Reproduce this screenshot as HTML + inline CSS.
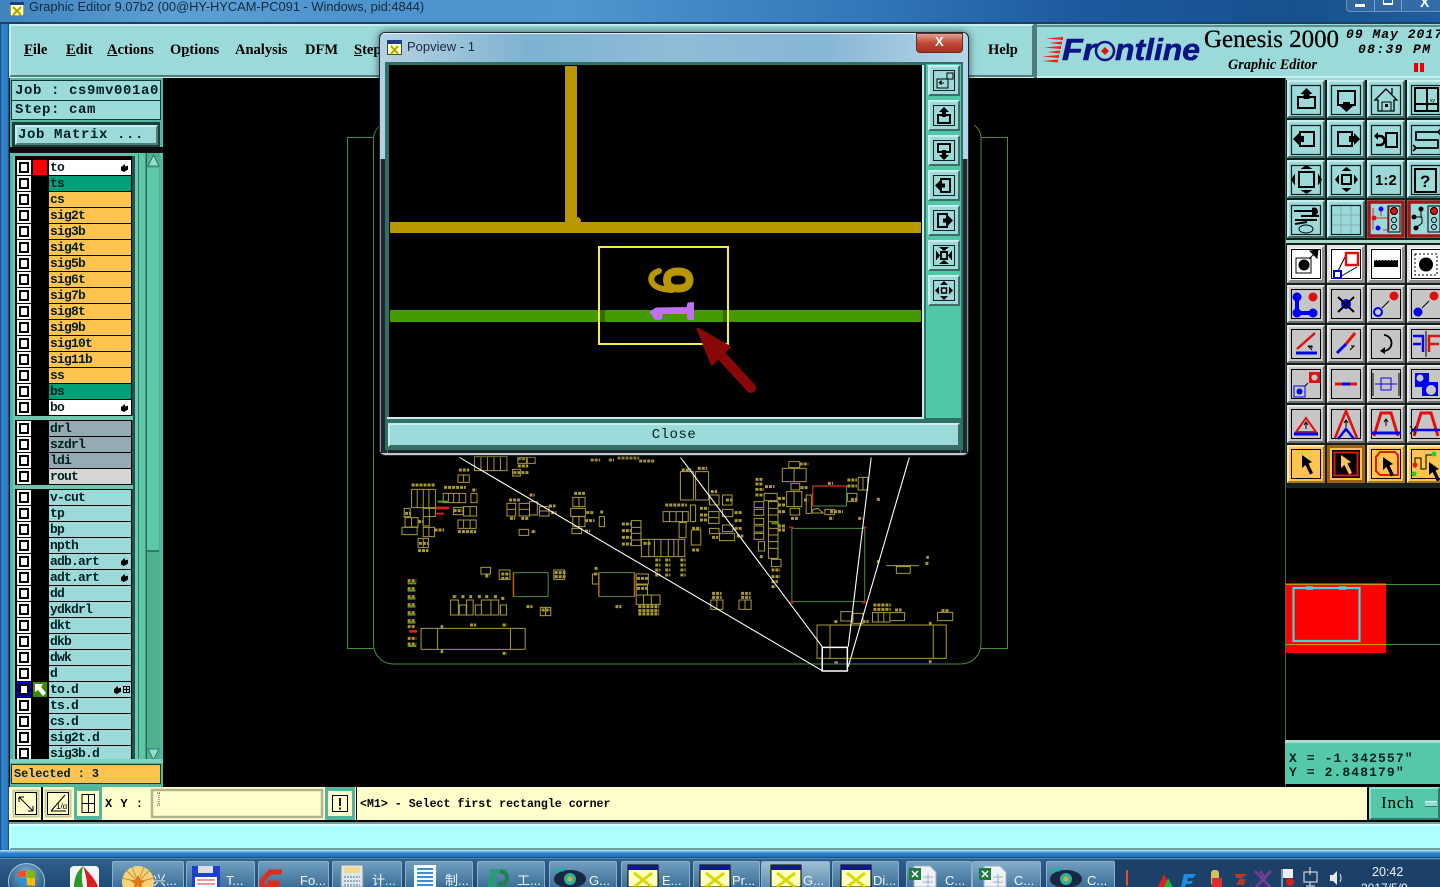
<!DOCTYPE html>
<html><head><meta charset="utf-8"><title>Graphic Editor</title>
<style>
html,body{margin:0;padding:0;width:1440px;height:887px;overflow:hidden;background:#000}
div,span,b,i,svg{position:absolute;display:block}
#root{position:relative;left:0;top:0;width:1440px;height:887px;overflow:hidden;background:#000}
body{font-family:"Liberation Mono",monospace;color:#001a1a}
.m{font:bold 14.5px/18px "Liberation Serif",serif;top:41px;color:#000;white-space:nowrap}
.m u{position:static;display:inline}
.box{background:#9cd9d9;font:bold 14px/17px "Liberation Mono",monospace;letter-spacing:.6px;white-space:pre;color:#00201f;box-sizing:border-box;padding-left:2px}
.r{left:17px;width:114px;height:15px}
.c{left:0;top:0;width:14px;height:15px;background:#fff}
.c:before{content:"";position:absolute;left:2px;top:2px;width:6px;height:7px;border:2px solid #000;background:#fff}
.p{left:16px;top:0;width:14px;height:15px}
.n{left:32px;top:0;width:82px;height:15px;font:bold 13px/16px "Liberation Mono",monospace;letter-spacing:-.8px;padding-left:1px;box-sizing:border-box;color:#00201f;white-space:pre;overflow:hidden;background:#9cd9d9}
.o{background:#fec351}.w{background:#fff}.g{background:#00a078}.s{background:#95aab2}.l{background:#d6d6d6}
.h{right:3px;top:4px;width:7px;height:8px;background:#000;clip-path:polygon(0 40%,50% 0,60% 30%,100% 20%,100% 70%,40% 100%,0 80%)}
.t{top:861px;height:26px;background:linear-gradient(#6f9ec0,#3d6f96);border:1px solid #8ab0cc;border-bottom:0;box-sizing:border-box;border-radius:2px 2px 0 0}
.tt{top:872px;font:13px/17px "Liberation Sans","Noto Sans CJK SC",sans-serif;color:#eef6fb;white-space:nowrap}
</style></head><body><div id="root">

<!-- Aero frame -->
<div style="left:0;top:0;width:1440px;height:24px;background:linear-gradient(90deg,#3f83bf 0,#5da0d4 12%,#4d93cd 25%,#4f95cf 40%,#2f74b5 62%,#1c5a9e 75%,#17518f 90%,#1e5d9e 100%)"></div>
<div style="left:0;top:22px;width:1440px;height:2px;background:#1e3f60"></div>
<div style="left:0;top:24px;width:9px;height:834px;background:linear-gradient(90deg,#1e3e62,#2f86cf 20%,#2a7cc6 85%,#1b3450)"></div>
<div style="left:0;top:850px;width:1440px;height:8px;background:linear-gradient(#bfe4f6,#2a82d0 40%,#2478c4 80%,#143e68)"></div>

<svg style="left:10px;top:2px" width="14" height="14"><rect width="14" height="14" fill="#ffffc0" stroke="#444"/><rect width="14" height="3" fill="#223a80"/><path d="M3 5l8 8M11 5l-8 8" stroke="#a8a800" stroke-width="2"/></svg>
<span style="left:29px;top:-1px;font:12.85px/15px 'Liberation Sans',sans-serif;color:#132a3c;white-space:nowrap">Graphic Editor 9.07b2 (00@HY-HYCAM-PC091 - Windows, pid:4844)</span>

<!-- window buttons -->
<div style="left:1346px;top:0;width:94px;height:12px;border:1px solid #6e93b5;border-top:0;border-right:0;border-radius:0 0 0 4px;box-sizing:border-box;background:rgba(255,255,255,.1)"></div>
<div style="left:1374px;top:0;width:1px;height:11px;background:#7fa3c2"></div><div style="left:1401px;top:0;width:1px;height:11px;background:#7fa3c2"></div>
<div style="left:1355px;top:4px;width:10px;height:3px;background:#fff"></div>
<div style="left:1383px;top:0;width:10px;height:5px;border:1px solid #fff;border-top:0;box-sizing:border-box;border-bottom-width:2px"></div>
<span style="left:1420px;top:-5px;font:bold 14px/14px 'Liberation Sans',sans-serif;color:#fff">X</span>

<!-- menu bar -->
<div style="left:9px;top:24px;width:1431px;height:54px;background:#9cd9d9;border-bottom:2px solid #c8efef;box-sizing:border-box"></div>
<div style="left:9px;top:24px;width:1025px;height:53px;box-sizing:border-box;border:2px solid;border-color:#c6eeee #4f7d7a #4f7d7a #c6eeee"></div>
<div style="left:1034px;top:24px;width:3px;height:54px;background:#4f7d7a"></div>
<div style="left:1036px;top:25px;width:404px;height:2px;background:#5f8c88"></div>
<span class="m" style="left:24px"><u>F</u>ile</span>
<span class="m" style="left:66px"><u>E</u>dit</span>
<span class="m" style="left:107px"><u>A</u>ctions</span>
<span class="m" style="left:170px">O<u>p</u>tions</span>
<span class="m" style="left:235px">Analysis</span>
<span class="m" style="left:305px">DFM</span>
<span class="m" style="left:354px"><u>S</u>tep</span>
<span class="m" style="left:988px">Help</span>

<!-- logo -->
<svg style="left:1036px;top:26px" width="404" height="52">
<path d="M10 12.500L27 11V14zM13 17L26 15.500V18.500zM8 21.500L25 20V23zM11 26L24 24.500V27.500zM6 30.500L23 29V32zM6 35L22 33.500V36.500z" fill="#f0201c"/>
<text x="26" y="34" font-family="Liberation Sans,sans-serif" font-size="31" font-style="italic" font-weight="bold" fill="#0a1486" stroke="#0a1486" stroke-width=".6" textLength="34" lengthAdjust="spacingAndGlyphs">Fr</text>
<circle cx="69" cy="25" r="9" fill="#9cd9d9" stroke="#0a1486" stroke-width="2.500"/><path d="M69 21l4 4-4 4-4-4z" fill="#e01010"/>
<text x="79" y="34" font-family="Liberation Sans,sans-serif" font-size="31" font-style="italic" font-weight="bold" fill="#0a1486" stroke="#0a1486" stroke-width=".6" textLength="85" lengthAdjust="spacingAndGlyphs">ntline</text>
<text x="168" y="21" font-family="Liberation Serif,serif" font-size="25" fill="#000" stroke="#000" stroke-width=".3" textLength="135" lengthAdjust="spacingAndGlyphs">Genesis 2000</text>
<text x="192" y="43" font-family="Liberation Serif,serif" font-size="14.5" font-style="italic" font-weight="bold" fill="#000" textLength="89" lengthAdjust="spacingAndGlyphs">Graphic Editor</text>
<text x="310" y="12" font-family="Liberation Mono,monospace" font-size="13" font-style="italic" font-weight="bold" fill="#000" textLength="96">09 May 2017</text>
<text x="322" y="27" font-family="Liberation Mono,monospace" font-size="13" font-style="italic" font-weight="bold" fill="#000" textLength="72">08:39 PM</text>
<path d="M378 37h4v9h-4zM384 37h4v9h-4z" fill="#ee0000"/>
</svg>

<!-- Left panel -->
<div style="left:10px;top:78px;width:153px;height:709px;background:#54b8a0"></div>
<div style="left:12px;top:81px;width:148px;height:19px;background:#9cd9d9;outline:1px solid #0f3a38"></div>
<span class="box" style="left:13px;top:83px;width:146px;height:16px">Job : cs9mv001a0</span>
<div style="left:12px;top:101px;width:148px;height:18px;background:#9cd9d9;outline:1px solid #0f3a38"></div>
<span class="box" style="left:13px;top:102px;width:146px;height:16px">Step: cam</span>
<div style="left:12px;top:122px;width:148px;height:25px;background:#1c3f3e"></div>
<div style="left:15px;top:125px;width:143px;height:20px;background:#9cd9d9;box-sizing:border-box;border:2px solid;border-color:#c6eeee #4f7d7a #4f7d7a #c6eeee"></div>
<span class="box" style="left:16px;top:127px;background:none;height:17px">Job Matrix ...</span>
<div style="left:10px;top:147px;width:153px;height:8px;background:#0d0d0d"></div>
<div style="left:10px;top:153px;width:153px;height:3px;background:#5cc4aa"></div>

<!-- list -->
<div style="left:13px;top:156px;width:121px;height:605px;background:#000"></div>
<div style="left:13px;top:156px;width:2px;height:605px;background:#6cc8b0"></div>
<div style="left:132px;top:156px;width:3px;height:605px;background:#24504c"></div>
<div style="left:15px;top:416px;width:118px;height:4px;background:#6cc8b0"></div>
<div style="left:15px;top:485px;width:118px;height:4px;background:#6cc8b0"></div>
<div style="left:135px;top:153px;width:12px;height:612px;background:linear-gradient(90deg,#6cc8b0 0,#6cc8b0 25%,#2f7a68 25%,#2f7a68 33%,#5cc8a8 33%,#5cc8a8 88%,#2a6a5c 88%)"></div>
<div style="left:147px;top:153px;width:13px;height:612px;background:#4fb090"></div>
<div style="left:147px;top:168px;width:12px;height:384px;background:#5cc8a8;border-bottom:2px solid #2f7a68;box-sizing:border-box"></div>
<svg style="left:147px;top:153px" width="13" height="612"><path d="M6.500 2L12 13H1z" fill="#8fded0" stroke="#2f7a68"/><path d="M1 596H12L6.500 607z" fill="#8fded0" stroke="#2f7a68"/></svg>

<div class="r" style="top:160px"><i class="c"></i><i class="p" style="background:#f00"></i><b class="n w">to</b><i class="h"></i></div>
<div class="r" style="top:176px"><i class="c"></i><b class="n g">ts</b></div>
<div class="r" style="top:192px"><i class="c"></i><b class="n o">cs</b></div>
<div class="r" style="top:208px"><i class="c"></i><b class="n o">sig2t</b></div>
<div class="r" style="top:224px"><i class="c"></i><b class="n o">sig3b</b></div>
<div class="r" style="top:240px"><i class="c"></i><b class="n o">sig4t</b></div>
<div class="r" style="top:256px"><i class="c"></i><b class="n o">sig5b</b></div>
<div class="r" style="top:272px"><i class="c"></i><b class="n o">sig6t</b></div>
<div class="r" style="top:288px"><i class="c"></i><b class="n o">sig7b</b></div>
<div class="r" style="top:304px"><i class="c"></i><b class="n o">sig8t</b></div>
<div class="r" style="top:320px"><i class="c"></i><b class="n o">sig9b</b></div>
<div class="r" style="top:336px"><i class="c"></i><b class="n o">sig10t</b></div>
<div class="r" style="top:352px"><i class="c"></i><b class="n o">sig11b</b></div>
<div class="r" style="top:368px"><i class="c"></i><b class="n o">ss</b></div>
<div class="r" style="top:384px"><i class="c"></i><b class="n g">bs</b></div>
<div class="r" style="top:400px"><i class="c"></i><b class="n w">bo</b><i class="h"></i></div>

<div class="r" style="top:421px"><i class="c"></i><b class="n s">drl</b></div>
<div class="r" style="top:437px"><i class="c"></i><b class="n s">szdrl</b></div>
<div class="r" style="top:453px"><i class="c"></i><b class="n s">ldi</b></div>
<div class="r" style="top:469px"><i class="c"></i><b class="n l">rout</b></div>

<div class="r" style="top:490px"><i class="c"></i><b class="n">v-cut</b></div>
<div class="r" style="top:506px"><i class="c"></i><b class="n">tp</b></div>
<div class="r" style="top:522px"><i class="c"></i><b class="n">bp</b></div>
<div class="r" style="top:538px"><i class="c"></i><b class="n">npth</b></div>
<div class="r" style="top:554px"><i class="c"></i><b class="n">adb.art</b><i class="h"></i></div>
<div class="r" style="top:570px"><i class="c"></i><b class="n">adt.art</b><i class="h"></i></div>
<div class="r" style="top:586px"><i class="c"></i><b class="n">dd</b></div>
<div class="r" style="top:602px"><i class="c"></i><b class="n">ydkdrl</b></div>
<div class="r" style="top:618px"><i class="c"></i><b class="n">dkt</b></div>
<div class="r" style="top:634px"><i class="c"></i><b class="n">dkb</b></div>
<div class="r" style="top:650px"><i class="c"></i><b class="n">dwk</b></div>
<div class="r" style="top:666px"><i class="c"></i><b class="n">d</b></div>
<div class="r" style="top:682px"><i class="c" style="background:#0000c0"></i><i class="p" style="background:#3f8a00"></i><svg style="left:17px;top:1px" width="12" height="13"><path d="M1 1h8L7 4l5 6-3 3-5-6-3 2z" fill="#fff"/></svg><b class="n">to.d</b><i class="h" style="right:10px"></i><svg style="left:106px;top:4px" width="7" height="7"><rect x=".5" y=".5" width="6" height="6" fill="#9cd9d9" stroke="#000"/><path d="M0 3.500h7M3.500 0v7" stroke="#000"/></svg></div>
<div class="r" style="top:698px"><i class="c"></i><b class="n">ts.d</b></div>
<div class="r" style="top:714px"><i class="c"></i><b class="n">cs.d</b></div>
<div class="r" style="top:730px"><i class="c"></i><b class="n">sig2t.d</b></div>
<div class="r" style="top:746px;height:13px;overflow:hidden"><i class="c"></i><b class="n">sig3b.d</b></div>

<div style="left:10px;top:759px;width:153px;height:6px;background:#7fd4bd"></div>
<div style="left:10px;top:763px;width:153px;height:22px;background:#54b8a0"></div>
<div style="left:12px;top:765px;width:148px;height:18px;background:#fec351;outline:1px solid #0f3a38;font:bold 11.8px/18px 'Liberation Mono',monospace;white-space:pre;padding-left:2px;box-sizing:border-box;color:#00201f">Selected : 3</div>

<!-- PCB -->
<svg style="left:163px;top:78px" width="1122" height="709" viewBox="163 78 1122 709">
<g fill="none" stroke="#4a8c3c" stroke-width="1">
<path d="M373.500 137.500H347.500V648.500H373.500M373.500 137V644a20 20 0 0 0 20 20H961a20 20 0 0 0 20-20V137M373.500 137Q375 129 381 125M974 125Q980 129 981 137M981 137.500H1007.500V648.500H981"/>
</g>
<g transform="translate(340 450) scale(.43365 .33333)">
<g fill="none" stroke="#a89a3a" stroke-width="1">
<path style="vector-effect:non-scaling-stroke" d="M310 20h75v42h-75zM325 20v42M340 20v42M355 20v42M370 20v42M272 75h26v22h-26zM285 75v22M398 58h18v20h-18zM410 22h20v18h-20zM432 22h18v18h-18zM165 118h55v55h-55zM178 118v55M192 118v55M205 118v55M238 130h52v28h-52zM250 130v28M262 130v28M275 130v28M302 130h14v28h-14zM148 175h14v25h-14zM192 175h28v25h-28zM206 175v25M192 200h14v28h-14zM150 203h30v28h-30zM165 203v28M143 232h35v22h-35zM192 232h26v28h-26zM205 232v28M262 172h22v22h-22zM285 170h30v28h-30zM300 170v28M272 210h42v25h-42zM285 210v25M300 210v25M180 265h24v28h-24zM192 265v28M385 160h20v38h-20zM385 178h20M413 160h24v38h-24zM413 178h24M437 155h18v40h-18zM460 170h22v28h-22zM460 183h22M532 175h34v24h-34zM537 142h28v28h-28zM551 142v28M537 200h28v30h-28zM551 200v30M598 200h12v30h-12zM535 235h22v16h-22zM413 238h22v18h-22zM785 65h30v85h-30zM820 65h30v85h-30zM745 185h58v30h-58zM760 185v30M775 185v30M790 185v30M808 165h12v50h-12zM852 135h22v30h-22zM850 185h24v35h-24zM850 203h24M882 135h22v30h-22zM882 178h24v22h-24zM882 225h24v20h-24zM852 235h22v16h-22zM875 250h35v22h-35zM782 218h16v45h-16zM810 240h22v45h-22zM672 212h22v75h-22zM672 232h22M672 250h22M672 270h22M695 268h100v52h-100zM712 268v52M725 268v52M740 268v52M757 268v52M770 268v52M780 268v52M955 155h22v18h-22zM955 178h22v18h-22zM955 205h22v18h-22zM955 228h22v18h-22zM955 250h22v18h-22zM988 155h22v170h-22zM988 175h22M988 195h22M988 215h22M988 235h22M988 255h22M988 275h22M988 295h22M978 130h30v22h-30zM965 275h14v28h-14zM995 328h22v22h-22zM1035 35h25v18h-25zM1020 55h55v40h-55zM1047 55v40M1040 100h20v20h-20zM1030 125h35v45h-35zM1047 125v45M1038 175h22v20h-22zM1195 82h22v38h-22zM1206 82v38M1170 130h22v24h-22zM1118 178h22v16h-22zM1075 135h12v55h-12zM325 352h22v20h-22zM367 360h25v28h-25zM493 360h25v28h-25zM582 372h14v30h-14zM683 372h28v30h-28zM683 405h26v30h-26zM683 435h55v28h-55zM700 435v28M718 435v28M855 450h28v28h-28zM869 450v28M920 450h28v28h-28zM934 450v28M255 450h18v45h-18zM275 465h16v30h-16zM292 450h15v45h-15zM312 465h14v30h-14zM326 450h22v45h-22zM348 450h18v45h-18zM370 465h14v30h-14zM462 472h24v25h-24zM474 472v25M187 535h240v63h-240zM225 535v63M393 535v63M1100 525h298v100h-298zM1130 525v100M1368 525v100M1155 485h28v28h-28zM1182 490h24v30h-24zM1228 488h40v28h-40zM1241 488v28M1254 488v28M1268 488h34v24h-34zM1378 487h35v25h-35zM1283 350h32v20h-32zM1260 347h75M1090 178l12-3 12 14h-24z"/>
</g>
<path d="M1090 108h78v60h-78z" fill="none" stroke="#4a8c3c" style="vector-effect:non-scaling-stroke"/>
<path d="M1090 108h78M1090 108v60" fill="none" stroke="#b03010" stroke-width="1.500" style="vector-effect:non-scaling-stroke"/>
<path d="M1042 235h168v220h-168z" fill="none" stroke="#4a8c3c" style="vector-effect:non-scaling-stroke"/>
<path d="M1042 232v8M1036 232h10M1210 232v8M1204 232h10M1042 450v8M1036 458h10M1210 450v8M1204 458h10" stroke="#b03010" stroke-width="1.500" style="vector-effect:non-scaling-stroke"/>
<path d="M400 368h80v72h-80zM597 368h82v72h-82z" fill="none" stroke="#4a8c3c" style="vector-effect:non-scaling-stroke"/>
<path d="M400 368v72M597 368v72M679 368v72" stroke="#b06020" stroke-width="1.500" style="vector-effect:non-scaling-stroke"/>
<g stroke="#a89838" stroke-width="3" fill="none" stroke-dasharray="3 1">
<path style="vector-effect:non-scaling-stroke" d="M274 60h24M400 68h35M410 48h24M410 26h20M578 30h22M620 30h12M640 24h50M690 33h35M165 105h55M240 112h50M305 120h10M262 182h20M150 190h14M180 215h12M218 240h22M272 245h42M180 302h24M182 280h22M392 205h12M418 205h18M390 150h25M437 135h12M482 168h15M487 188h12M540 130h25M568 188h18M565 212h22M600 186h8M565 243h12M442 245h10M788 60h22M825 55h22M750 165h50M830 175h20M830 195h20M830 210h20M855 125h15M890 150h15M910 188h18M910 212h18M910 235h18M858 262h14M915 258h15M812 235h20M812 300h18M650 222h22M650 242h22M650 262h22M650 282h22M700 280h18M727 330h12M727 345h12M727 360h12M727 375h12M750 330h12M750 345h12M750 360h12M750 375h12M785 330h12M785 345h12M785 360h12M785 375h12M958 88h18M958 102h18M958 118h20M958 135h20M980 110h22M1010 145h18M1010 165h18M1010 185h18M1010 228h18M1010 240h18M1060 42h20M1062 113h18M1040 205h16M1070 150h10M1125 100h12M1130 185h30M1128 205h10M1170 90h22M1170 108h22M1178 148h14M1195 205h10M1238 148h8M1238 335h6M1350 340h8M1352 322h6M995 360h20M995 380h20M995 395h15M995 410h10M968 320h8M335 378h10M372 372h20M372 385h20M495 368h25M495 380h25M587 355h8M592 372h-6M685 385h25M685 415h25M688 470h48M688 482h48M688 492h48M858 430h22M858 442h22M925 430h22M925 442h22M260 440h10M280 440h8M298 440h8M318 440h8M335 440h8M355 440h8M372 445h8M430 470h14M635 470h14M465 480h20M300 525h14M375 525h10M232 530h6M232 605h6M375 610h10M1140 515h8M1205 515h14M1230 465h40M1230 478h40M1280 480h15M1387 482h18M1358 520h6M1358 635h6"/>
</g>
<g stroke="#b09030" stroke-width="3" fill="none" stroke-dasharray="3 1"><path style="vector-effect:non-scaling-stroke" d="M156 392h20M156 416h18M156 440h18M156 464h18M156 488h18M156 512h18M156 530h18M156 565h20M156 582h20"/></g>
<g stroke="#5a9a20" stroke-width="2" fill="none"><path style="vector-effect:non-scaling-stroke" d="M156 400h20M156 422h18M156 446h18M156 470h18M156 494h18M156 518h18M156 588h20M225 155h25M995 220h18"/></g>
<path d="M160 540h18v8h-18zM222 170h30v8h-30zM222 188h18v6h-18z" fill="#e02020"/>
<g fill="none" stroke="#fff" stroke-width="1.100">
<path style="vector-effect:non-scaling-stroke" d="M275 22L1112 662M785 22L1112 590M1225 22L1172 590M1313 22L1172 650"/>
<path style="vector-effect:non-scaling-stroke" d="M1112 592h58v71h-58z" stroke-width="1.500"/>
</g>
<path d="M1140 634h8v6h-8z" fill="#b0a040"/>
</g>
</svg>

<!-- Right panel -->
<div style="left:1285px;top:78px;width:155px;height:410px;background:#16201f"></div>
<div style="left:1285px;top:78px;width:1px;height:710px;background:#3a6a5c"></div>
<div style="left:1286px;top:78px;width:154px;height:2px;background:#9cd9d9"></div>
<div style="left:1286px;top:240px;width:154px;height:3px;background:#a8d8c8"></div>
<svg style="left:1286px;top:78px" width="154" height="410" viewBox="0 0 154 410">
<defs>
<g id="T"><rect width="38" height="38" fill="#9cd9d9"/><path d="M0 0H38L36 2H2V36L0 38Z" fill="#c6eeee"/><path d="M38 0V38H0L2 36H36V2Z" fill="#3e6b68"/><rect x="4.500" y="5.500" width="29" height="29" fill="none" stroke="#102020" stroke-width="1.200"/></g>
<g id="W"><rect width="38" height="38" fill="#fff"/><path d="M0 0H38L35 3H3V35L0 38Z" fill="#e4e4e4"/><path d="M38 0V38H0L3 35H35V3Z" fill="#8c8c8c"/><rect x="4.500" y="4.500" width="29" height="29" fill="none" stroke="#000"/></g>
<g id="G"><rect width="38" height="38" fill="#c6c6c6"/><path d="M0 0H38L36 2H2V36L0 38Z" fill="#e8e8e8"/><path d="M38 0V38H0L2 36H36V2Z" fill="#6c6c6c"/><rect x="4.500" y="4.500" width="29" height="29" fill="none" stroke="#000"/></g>
<g id="O"><rect width="38" height="38" fill="#fec351"/><path d="M0 0H38L36 2H2V36L0 38Z" fill="#ffe7a8"/><path d="M38 0V38H0L2 36H36V2Z" fill="#a07a20"/><rect x="4.500" y="4.500" width="29" height="29" fill="none" stroke="#000"/></g>
<path id="cur" d="M0 0L10 7 6.500 8.500 11 18 8 19.500 3.500 10 0 13Z"/>
</defs>
<!-- rows 1-4 -->
<g transform="translate(1 2)"><use href="#T"/><path d="M11 17h17v11H11z" fill="none" stroke="#000" stroke-width="2"/><path d="M19.500 8l6 6h-3v5h-6v-5h-3z"/></g>
<g transform="translate(41 2)"><use href="#T"/><path d="M11 11h17v14H11z" fill="none" stroke="#000" stroke-width="2"/><path d="M16 22h7v4h3l-6.500 6-6.500-6h3z"/></g>
<g transform="translate(81 2)"><use href="#T"/><path d="M19 9L8 20h3v11h16V20h3zM25 8v6" fill="none" stroke="#000" stroke-width="1.300"/><path d="M15 22h9v9h-9z" fill="#9cd9d9" stroke="#000"/><path d="M18 24h3v3h-3z"/></g>
<g transform="translate(121 2)"><use href="#T"/><path d="M8 8h23v23H8zM8 24h23M20 8v23" fill="none" stroke="#000" stroke-width="2"/><text x="23" y="22" font-family="Liberation Sans,sans-serif" font-size="5" fill="#000">xy</text></g>
<g transform="translate(1 42)"><use href="#T"/><path d="M13 12h14v14H13z" fill="none" stroke="#000" stroke-width="2"/><path d="M6 19l6-6v3h5v6h-5v3z"/></g>
<g transform="translate(41 42)"><use href="#T"/><path d="M11 12h14v14H11z" fill="none" stroke="#000" stroke-width="2"/><path d="M33 19l-6-6v3h-5v6h5v3z"/></g>
<g transform="translate(81 42)"><use href="#T"/><path d="M19 13h11v14H19z" fill="none" stroke="#000" stroke-width="2"/><path d="M9 16h4a4 4 0 0 1 0 9h-4" fill="none" stroke="#000" stroke-width="2.500"/><path d="M7 16l4-4v8z"/></g>
<g transform="translate(121 42)"><use href="#T"/><path d="M31 12H9V20H31V28H9M31 12l3-3M31 12l3 3M9 28l-3-3M9 28l-3 3" fill="none" stroke="#000" stroke-width="1.800"/></g>
<g transform="translate(1 82)"><use href="#T"/><path d="M12 12h15v15H12z" fill="none" stroke="#000" stroke-width="2"/><path d="M19.500 5l6 4h-12zM19.500 34l6-4h-12zM4 19.500l4-6v12zM35 19.500l-4-6v12z"/></g>
<g transform="translate(41 82)"><use href="#T"/><path d="M15 15h9v9h-9z" fill="none" stroke="#000" stroke-width="2"/><path d="M19.500 7l5 4h-10zM19.500 32l5-4h-10zM8 19.500l4-5v10zM31 19.500l-4-5v10z"/></g>
<g transform="translate(81 82)"><use href="#T"/><text x="8" y="25" font-family="Liberation Sans,sans-serif" font-weight="bold" font-size="15" fill="#000">1:2</text></g>
<g transform="translate(121 82)"><use href="#T"/><path d="M8 9h21v23H8z" fill="none" stroke="#000" stroke-width="2"/><text x="13" y="27" font-family="Liberation Sans,sans-serif" font-weight="bold" font-size="17" fill="#000">?</text></g>
<g transform="translate(1 122)"><use href="#T"/><path d="M7 11h22M14 16h18M8 20h22M8 24l12-2" stroke="#000" stroke-width="2"/><path d="M25 8a4 4 0 1 1 0 7z"/><ellipse cx="19" cy="29" rx="7" ry="4" fill="#9cd9d9" stroke="#000"/></g>
<g transform="translate(41 122)"><use href="#T"/><path d="M5 15h28M5 25h28M14 6v28M24 6v28" stroke="#86aeb4"/></g>
<g transform="translate(81 122)"><rect width="38" height="38" fill="#9cd9d9"/><rect x="2" y="2" width="34" height="34" fill="#9cd9d9" stroke="#a01818" stroke-width="3.500"/><path d="M6 8V30M6 18h7l8 0M14 8v8M16 30h6M22 6v24" fill="none" stroke="#e03030"/><circle cx="14" cy="9" r="2.500" fill="#10f"/><circle cx="7" cy="18" r="2.500" fill="#e01010"/><circle cx="11" cy="28" r="2.500" fill="#10f"/><rect x="21" y="6" width="12" height="26" fill="none" stroke="#000"/><circle cx="27" cy="11" r="3.500" fill="#e01010" stroke="#000"/><circle cx="27" cy="20" r="2.500" fill="none" stroke="#000"/><circle cx="27" cy="27" r="2.500" fill="none" stroke="#000"/></g>
<g transform="translate(121 122)"><rect width="38" height="38" fill="#9cd9d9"/><rect x="2" y="2" width="34" height="34" fill="#9cd9d9" stroke="#a01818" stroke-width="3.500"/><path d="M7 17h8M14 9v8M10 27l5-4v-6" fill="none" stroke="#000"/><circle cx="14" cy="9" r="2.500"/><circle cx="7" cy="17" r="2.500"/><circle cx="9" cy="28" r="2.500"/><rect x="21" y="6" width="12" height="26" fill="none" stroke="#000"/><circle cx="27" cy="11" r="3.500" fill="#e01010" stroke="#000"/><circle cx="27" cy="20" r="2.500" fill="none" stroke="#000"/><circle cx="27" cy="27" r="2.500" fill="none" stroke="#000"/></g>
<!-- white row -->
<g transform="translate(1 167)"><use href="#W"/><rect x="9" y="13" width="15" height="15" fill="none" stroke="#000"/><circle cx="17" cy="20" r="5.500"/><path d="M22 14l7-7M31 5l-8 1 7 7z" stroke="#000"/></g>
<g transform="translate(41 167)"><use href="#W"/><path d="M10 28L19 10M11 33L30 22" stroke="#000" fill="none"/><path d="M19 8h12v12H19z" fill="#fff" stroke="#e01010" stroke-width="2.500"/><path d="M7 26h7v7H7z" fill="#fff" stroke="#00d" stroke-width="2"/></g>
<g transform="translate(81 167)"><use href="#W"/><path d="M7 15h24v7H7z"/><path d="M8 14v2M11 14v2M14 14v2M17 14v2M20 14v2M23 14v2M26 14v2M29 14v2" stroke="#fff"/></g>
<g transform="translate(121 167)"><use href="#W"/><rect x="8" y="9" width="22" height="21" fill="none" stroke="#000" stroke-dasharray="2 2"/><circle cx="19" cy="19.500" r="7"/></g>
<!-- gray rows -->
<g transform="translate(1 207)"><use href="#G"/><path d="M10 12V28H26" fill="none" stroke="#00e" stroke-width="4"/><circle cx="10" cy="12" r="4.500" fill="#00e"/><circle cx="10" cy="28" r="4.500" fill="#00e"/><circle cx="26" cy="28" r="4.500" fill="#00e"/><circle cx="26" cy="12" r="4.500" fill="#e01010"/></g>
<g transform="translate(41 207)"><use href="#G"/><circle cx="19" cy="19" r="5" fill="#00e"/><path d="M11 12l16 15M27 12L11 27" stroke="#000" stroke-width="2"/></g>
<g transform="translate(81 207)"><use href="#G"/><circle cx="11" cy="27" r="4" fill="none" stroke="#00e" stroke-width="2"/><circle cx="27" cy="11" r="4.500" fill="#e01010"/><path d="M15 23l7-7" stroke="#000"/></g>
<g transform="translate(121 207)"><use href="#G"/><circle cx="11" cy="27" r="4.500" fill="#00e"/><circle cx="27" cy="11" r="4.500" fill="#e01010"/><path d="M15 23l7-7" stroke="#000"/></g>
<g transform="translate(1 247)"><use href="#G"/><path d="M10 24L28 8" stroke="#e01010" stroke-width="2.500"/><path d="M9 28h21" stroke="#00e" stroke-width="3"/><path d="M21 21l4 4M21 21h4v2" stroke="#000"/></g>
<g transform="translate(41 247)"><use href="#G"/><path d="M10 28L19 19" stroke="#00e" stroke-width="3"/><path d="M19 19L28 8" stroke="#e01010" stroke-width="3"/><path d="M23 25l4-4h-3" stroke="#000" fill="none"/></g>
<g transform="translate(81 247)"><use href="#G"/><path d="M17 10a8 8 0 1 1 -1 16" fill="none" stroke="#000" stroke-width="1.800"/><path d="M13 26l5-4v7z"/></g>
<g transform="translate(121 247)"><use href="#G"/><path d="M6 11h10V27M6 19h8" fill="none" stroke="#10e" stroke-width="2.500"/><path d="M19 6V32" stroke="#000"/><path d="M34 11H22V27M22 19h10" fill="none" stroke="#e01010" stroke-width="2.500"/></g>
<g transform="translate(1 287)"><use href="#G"/><path d="M22 7h11v11H22z" fill="#e01010"/><circle cx="27.500" cy="12.500" r="3" fill="#c6c6c6"/><rect x="7" y="21" width="11" height="11" fill="none" stroke="#00e"/><circle cx="12.500" cy="26.500" r="3" fill="#00e"/><path d="M18 21l3-3" stroke="#000"/></g>
<g transform="translate(41 287)"><use href="#G"/><path d="M8 19h22" stroke="#e01010" stroke-width="3"/><path d="M15 19h8" stroke="#00e" stroke-width="3"/></g>
<g transform="translate(81 287)"><use href="#G"/><path d="M6 8V31M32 8V31" stroke="#000"/><path d="M8 19h22" stroke="#10e"/><rect x="14" y="13" width="10" height="12" fill="none" stroke="#10e"/></g>
<g transform="translate(121 287)"><use href="#G"/><path d="M8 8h14v9h9v14H15v-9H8z" fill="#00e"/><circle cx="13" cy="13" r="3.500" fill="#c6c6c6"/><circle cx="24" cy="25" r="5" fill="#c6c6c6"/></g>
<g transform="translate(1 327)"><use href="#G"/><path d="M19 13L29 27H9z" fill="none" stroke="#e01010" stroke-width="2"/><path d="M7 29h24" stroke="#00e" stroke-width="3"/><path d="M19 24v-6M17 20l2-3 2 3" stroke="#000" fill="none"/></g>
<g transform="translate(41 327)"><use href="#G"/><path d="M8 33L19 6 30 33" fill="none" stroke="#e01010" stroke-width="2.500"/><path d="M11 34L19 24 27 34" fill="none" stroke="#00e" stroke-width="2.500"/><path d="M19 22v-6M17 18l2-3 2 3" stroke="#000" fill="none"/></g>
<g transform="translate(81 327)"><use href="#G"/><path d="M7 31L14 8H24L31 31" fill="none" stroke="#e01010" stroke-width="3"/><path d="M4 28h30" stroke="#00e" stroke-width="3"/><path d="M19 21v-6M17 17l2-3 2 3" stroke="#000" fill="none"/></g>
<g transform="translate(121 327)"><use href="#G"/><path d="M7 31L14 8H24L31 31" fill="none" stroke="#e01010" stroke-width="3"/><path d="M4 25h30" stroke="#00e" stroke-width="2.500"/><path d="M3 21l6 8M9 21l-6 8" stroke="#000"/></g>
<!-- orange -->
<g transform="translate(1 367)"><use href="#O"/><use href="#cur" transform="translate(15 10)"/></g>
<g transform="translate(41 367)"><rect width="38" height="38" fill="#a06018"/><rect x="3" y="3" width="32" height="32" fill="#fec351"/><rect x="5" y="5" width="28" height="28" fill="#000"/><rect x="7.500" y="7.500" width="23" height="23" fill="#000" stroke="#d02010" stroke-width="2"/><use href="#cur" transform="translate(14 10)" fill="#fec351"/></g>
<g transform="translate(81 367)"><use href="#O"/><path d="M9 12l4-5H28l3 3V30H13l-4-4z" fill="none" stroke="#d82010" stroke-width="2"/><use href="#cur" transform="translate(16 12)"/></g>
<g transform="translate(121 367)"><use href="#O"/><path d="M8 23V13H14V24H19V10H27" fill="none" stroke="#000"/><circle cx="8" cy="20" r="2.500" fill="#e02020"/><circle cx="7" cy="29" r="2.500" fill="#20d020"/><circle cx="27" cy="9" r="2.500" fill="#20d020"/><use href="#cur" transform="translate(22 17)"/></g>
</svg>

<!-- minimap -->
<div style="left:1286px;top:583px;width:100px;height:70px;background:#f00"></div>
<svg style="left:1286px;top:580px" width="154" height="70"><path d="M0 4.500H154M0 64.500H154" stroke="#4a8c3c"/><path d="M0 4.500H100M0 64.500H100" stroke="#d89000"/><path d="M7.500 8h66v53h-66z" fill="none" stroke="#40d8e0" stroke-width="2.200"/><path d="M20 8h7M53 8h7" stroke="#40d8e0" stroke-width="3.500"/></svg>
<div style="left:1285px;top:740px;width:155px;height:3px;background:#a8ded0"></div>
<div style="left:1285px;top:743px;width:155px;height:41px;background:#54c8a8"></div>
<span class="box" style="left:1287px;top:750px;background:none;letter-spacing:1.100px;font-size:13px;height:16px">X = -1.342557"</span>
<span class="box" style="left:1287px;top:764px;background:none;letter-spacing:1.100px;font-size:13px;height:16px">Y = 2.848179"</span>

<!-- bottom command row -->
<div style="left:9px;top:787px;width:1431px;height:33px;background:#ffffcc"></div>
<div style="left:9px;top:820px;width:1431px;height:4px;background:linear-gradient(#000 50%,#6f9f9f 50%)"></div>
<svg style="left:9px;top:787px" width="350" height="33">
<g fill="none" stroke="#000"><rect x="4.500" y="3.500" width="25" height="26" stroke="#c8c89a" stroke-width="2"/><rect x="6.500" y="5.500" width="21" height="22"/><path d="M10 10l14 14M10 10v5M10 10h5M24 24v-5M24 24h-5"/>
<rect x="36.500" y="3.500" width="25" height="26" stroke="#c8c89a" stroke-width="2"/><rect x="38.500" y="5.500" width="21" height="22"/><path d="M42 24h15M42 24L56 8"/><text x="47" y="22" font-size="8" font-family="Liberation Sans,sans-serif" fill="#000" stroke="none">1/α</text></g>
<rect x="32" y="0" width="2" height="33" fill="#000"/><rect x="65" y="0" width="28" height="33" fill="#57b49c"/><rect x="68" y="4" width="22" height="25" fill="#ffffcc"/>
<path d="M73 7.500H85.500V25.500H73V12zM73 16.500H85.500M79.500 7.500V25.500" fill="none" stroke="#000"/>
<rect x="143" y="3" width="170" height="27" fill="#ffffcc" stroke="#b4b48c" stroke-width="2.500"/>
<path d="M150 6v12M148 6h4M148 18h4" stroke="#444" stroke-dasharray="1 1"/>
<rect x="316" y="0" width="30" height="33" fill="#57b49c"/><rect x="319" y="4" width="24" height="25" fill="#ffffcc"/>
<rect x="323.500" y="8.500" width="15" height="16" fill="none" stroke="#000"/><path d="M331 11v8M331 20.500v2" stroke="#000" stroke-width="1.800"/>
<rect x="347" y="0" width="1" height="33" fill="#000"/>
</svg>
<span style="left:105px;top:796px;font:bold 12px/17px 'Liberation Mono',monospace;color:#000;white-space:pre;letter-spacing:.5px">X Y :</span>
<span style="left:360px;top:796px;font:bold 11.600px/17px 'Liberation Mono',monospace;color:#000;white-space:pre">&lt;M1&gt; - Select first rectangle corner</span>
<div style="left:1367px;top:787px;width:2px;height:33px;background:#000"></div>
<div style="left:1369px;top:787px;width:71px;height:33px;background:#54c8a8;border:2px solid;border-color:#8fded0 #2f7a68 #2f7a68 #8fded0;box-sizing:border-box"></div>
<span style="left:1381px;top:794px;font:17px/18px 'Liberation Serif',serif;letter-spacing:.8px;color:#000">Inch</span>
<div style="left:1425px;top:801px;width:12px;height:6px;background:#9cd9d9;border-bottom:1px solid #2f7a68;border-top:1px solid #d8f8f8;box-sizing:border-box"></div>

<!-- message bar -->
<div style="left:9px;top:824px;width:1431px;height:26px;background:#aeffff;border-top:2px solid #d8ffff;border-left:2px solid #d8ffff;border-bottom:2px solid #6f9f9f;box-sizing:border-box"></div>

<!-- Taskbar -->
<div style="left:0;top:858px;width:1440px;height:29px;background:linear-gradient(#2f5f8c,#1f4a74);border-top:1px solid #5d88ad;box-sizing:border-box"></div>
<div style="left:1115px;top:860px;width:325px;height:27px;background:#1c4068"></div>
<div style="left:8px;top:863px;width:37px;height:37px;border-radius:50%;background:radial-gradient(circle at 50% 30%,#7fb5d8,#28587f 70%);border:1px solid #a8c8dc;box-sizing:border-box"></div>
<svg style="left:17px;top:870px" width="20" height="17"><path d="M1 2l8-2v7H1z" fill="#f25022"/><path d="M10 0l8 1v7h-8z" fill="#7fba00"/><path d="M1 8h8v7l-8-2z" fill="#2f8ee0"/><path d="M10 8h8v8l-8-1z" fill="#ffb900"/></svg>
<svg style="left:70px;top:866px" width="29" height="21"><rect width="29" height="24" rx="4" fill="#f4f4f4"/><path d="M13 0C6 6 4 14 4 21h9C11 12 12 6 13 0z" fill="#2a9a2a"/><path d="M13 0C20 8 26 14 28 21H17C17 12 15 6 13 0z" fill="#d82020"/></svg>

<div class="t" style="left:112px;width:72px"></div>
<div class="t" style="left:186px;width:69px"></div>
<div class="t" style="left:258px;width:71px"></div>
<div class="t" style="left:332px;width:70px"></div>
<div class="t" style="left:405px;width:68px"></div>
<div class="t" style="left:477px;width:68px"></div>
<div class="t" style="left:549px;width:68px"></div>
<div class="t" style="left:621px;width:69px"></div>
<div class="t" style="left:693px;width:67px"></div>
<div class="t" style="left:761px;width:69px;background:linear-gradient(#9fc0d6,#5f8cb0)"></div>
<div class="t" style="left:832px;width:67px"></div>
<div class="t" style="left:906px;width:66px"></div>
<div class="t" style="left:972px;width:69px;background:linear-gradient(#85aecb,#4a7aa2)"></div>
<div class="t" style="left:1046px;width:69px"></div>

<svg style="left:118px;top:864px" width="1010" height="23">
<circle cx="20" cy="18" r="16" fill="#f6d27a"/><path d="M20 18L8 6M20 18L14 3M20 18L26 3M20 18L32 6M20 18L36 14M20 18L4 14" stroke="#c09030"/><path d="M20 11l2.500 5 5 .5-4 3.500 1 5-4.500-3-4.500 3 1-5-4-3.500 5-.5z" fill="#e07818"/>
<path d="M74 2h28v21H74z" fill="#1f3fd0"/><rect x="80" y="2" width="15" height="7" fill="#dde"/><rect x="77" y="13" width="22" height="10" fill="#fff"/><path d="M79 16h18M79 20h18" stroke="#d03030"/>
<path d="M164 8h-12l-8 9v6h8v-4h7v4h-7" fill="none" stroke="#d83020" stroke-width="5"/>
<rect x="223" y="1" width="22" height="22" fill="#dde6ee" stroke="#7f8f9f"/><rect x="226" y="3" width="16" height="6" fill="#f0d890"/><path d="M226 13h16M226 17h16M226 21h16" stroke="#607080" stroke-dasharray="2 1"/>
<rect x="296" y="1" width="22" height="22" fill="#f4f8fc"/><path d="M299 5h16M299 9h16M299 13h16M299 17h16M299 21h16" stroke="#3f8fd0" stroke-width="2"/>
<path d="M372 5h18l-2 5h-10v13h-8z" fill="#2a9a7a"/><path d="M382 8a6 6 0 0 1 2 12h-4" fill="none" stroke="#208050" stroke-width="4"/>
<ellipse cx="452" cy="15" rx="16" ry="9" fill="#182840"/><circle cx="452" cy="15" r="6" fill="#30b0a0"/><circle cx="452" cy="15" r="2.500" fill="#d0b030"/><path d="M436 6h10" stroke="#20b0a0" stroke-width="3"/>
<g id="x1"><rect x="510" y="1" width="30" height="22" fill="#ffffc0" stroke="#000"/><rect x="510" y="1" width="30" height="5" fill="#101890"/><path d="M516 9l18 14M534 9L516 23" stroke="#d8d800" stroke-width="3"/></g>
<use href="#x1" x="72"/><use href="#x1" x="143"/><use href="#x1" x="213"/>
<path d="M796 2h16l6 6v15h-22z" fill="#eef2f6" stroke="#a0b0c0"/><rect x="791" y="4" width="12" height="12" fill="#1f7a3c"/><path d="M794 7l6 6M800 7l-6 6" stroke="#fff" stroke-width="1.500"/><path d="M805 13h10M805 18h10M810 10v13" stroke="#a0b0c0"/>
<path d="M866 2h16l6 6v15h-22z" fill="#eef2f6" stroke="#a0b0c0"/><rect x="861" y="4" width="12" height="12" fill="#1f7a3c"/><path d="M864 7l6 6M870 7l-6 6" stroke="#fff" stroke-width="1.500"/><path d="M875 13h10M875 18h10M880 10v13" stroke="#a0b0c0"/>
<ellipse cx="948" cy="15" rx="16" ry="9" fill="#182840"/><circle cx="948" cy="15" r="6" fill="#30b0a0"/><circle cx="948" cy="15" r="2.500" fill="#d0b030"/><path d="M932 6h10" stroke="#20b0a0" stroke-width="3"/>
<rect x="1008" y="6" width="16" height="16" rx="2" fill="#e8501e"/><text x="1011" y="19" font-family="Liberation Sans,sans-serif" font-weight="bold" font-size="14" fill="#fff">S</text>
</svg>
<svg style="left:1150px;top:866px" width="225" height="21">
<path d="M8 21L14 8 20 21z" fill="#e02020"/><path d="M14 21l4-9 5 9z" fill="#20b040"/>
<path d="M34 8h12l-3 4h-5l-1 3h6l-2 3h-5l-1 3h-4z" fill="#1a8ee0"/>
<rect x="61" y="4" width="8" height="16" fill="#d0c060" rx="3"/><rect x="62" y="12" width="10" height="9" fill="#d83030"/>
<path d="M85 8h12l-6 5 5 0-2 6h-8l4-7h-4z" fill="#b03a28"/>
<path d="M105 5l16 17M121 5L105 22M110 5L115 12 120 5" stroke="#7a3a98" stroke-width="2.500" fill="none"/>
<path d="M132 3v18" stroke="#eee"/><path d="M133 3h10v9h-10z" fill="#eee"/><circle cx="140" cy="16" r="4" fill="#d02020"/>
<rect x="154" y="6" width="13" height="10" fill="none" stroke="#eee"/><path d="M160 1v8M156 20h9M160 16v4" stroke="#eee"/>
<path d="M180 9h3l4-4v14l-4-4h-3z" fill="#e8e8e8"/><path d="M190 8q2 4 0 8" stroke="#e8e8e8" fill="none"/>
</svg>
<span class="tt" style="left:153px">兴...</span>
<span class="tt" style="left:226px">T...</span>
<span class="tt" style="left:300px">Fo...</span>
<span class="tt" style="left:372px">计...</span>
<span class="tt" style="left:445px">制...</span>
<span class="tt" style="left:517px">工...</span>
<span class="tt" style="left:589px">G...</span>
<span class="tt" style="left:662px">E...</span>
<span class="tt" style="left:732px">Pr...</span>
<span class="tt" style="left:803px">G...</span>
<span class="tt" style="left:873px">Di...</span>
<span class="tt" style="left:945px">C...</span>
<span class="tt" style="left:1014px">C...</span>
<span class="tt" style="left:1087px">C...</span>
<span class="tt" style="left:1372px;top:864px;font-size:12.500px">20:42</span>
<span class="tt" style="left:1361px;top:880px;font-size:12px">2017/5/9</span>

<!-- Popup -->
<div style="left:379px;top:32px;width:590px;height:424px;border-radius:6px;border:1px solid #1a2a34;box-sizing:border-box;background:#1c2226;box-shadow:0 0 8px rgba(0,0,0,.6);overflow:hidden">
<div style="left:0;top:0;width:590px;height:126px;background:linear-gradient(90deg,#b6d2e2,#7eb2d2 25%,#8ebcd8 50%,#86b6d6 75%,#b8d6e8)"></div>
<div style="left:0;top:126px;width:8px;height:296px;background:#20282c;border-right:1px solid #5a6a70;border-left:1px solid #8a9298;box-sizing:border-box"></div>
<div style="left:580px;top:126px;width:8px;height:296px;background:#20282c;border-left:1px solid #5a6a70;border-right:1px solid #8a9298;box-sizing:border-box"></div>
<div style="left:1px;top:0;width:586px;height:1px;background:#e8f2f8"></div>
<div style="left:0;top:420px;width:590px;height:2px;background:#c0c8cc"></div>
</div>
<div style="left:916px;top:33px;width:47px;height:20px;background:linear-gradient(#e0a090,#c04a38 50%,#a83020);border-radius:0 0 4px 4px;border:1px solid #6a2a20;box-sizing:border-box"></div>
<span style="left:935px;top:35px;font:bold 13px/14px 'Liberation Sans',sans-serif;color:#fff">X</span>
<svg style="left:387px;top:40px" width="15" height="15"><rect x=".5" y=".5" width="14" height="14" fill="#ffffc0" stroke="#444"/><rect width="15" height="4" fill="#223a80"/><path d="M4 6l7 8M11 6l-7 8" stroke="#a8a800" stroke-width="2"/></svg>
<span style="left:407px;top:39px;font:13px/15px 'Liberation Sans',sans-serif;color:#1a2a3a">Popview - 1</span>
<div style="left:385px;top:62px;width:578px;height:387px;background:#2f6f64"></div>
<div style="left:389px;top:65px;width:533px;height:352px;background:#000"></div>
<div style="left:387px;top:417px;width:537px;height:2px;background:#c6eeee"></div>
<div style="left:922px;top:65px;width:2px;height:354px;background:#c6eeee"></div>
<div style="left:926px;top:64px;width:35px;height:354px;background:#4fc8a8"></div>
<svg style="left:389px;top:65px" width="533" height="352" viewBox="389 65 533 352">
<rect x="565" y="66" width="12" height="160" fill="#b89600"/>
<circle cx="577" cy="221" r="4" fill="#b89600"/>
<rect x="390" y="222" width="531" height="11" fill="#b89600"/>
<rect x="390" y="310" width="531" height="12" fill="#449a00"/>
<path d="M599 310h6v12h-6zM723 310h5v12h-5z" fill="#2a5a00" opacity=".7"/>
<rect x="599" y="247" width="129" height="97" fill="none" stroke="#f4ee40" stroke-width="2"/>
<path d="M667 280Q667 271.500 678 271.500Q689.500 271.500 689.500 280Q689.500 288.500 678 288.500Q667 288.500 667 280Z" fill="none" stroke="#b89600" stroke-width="8"/>
<path d="M659 271Q650 274 651.500 281Q654 289 672 290" fill="none" stroke="#b89600" stroke-width="6" stroke-linecap="round"/>
<path d="M650 312L656 308 687 307.500 688 303 693.500 302.500 693.500 319.500 688 319.500 687 313.500 662 313.500 661.500 319 655.500 319.500Z" fill="#c070f0" stroke="#c070f0" stroke-linejoin="round"/>
<path d="M698 329L729 347 712 364Z" fill="#880808" stroke="#880808" stroke-width="3" stroke-linejoin="round"/>
<path d="M718 352L751 388" stroke="#880808" stroke-width="10" stroke-linecap="round"/>
</svg>
<svg style="left:926px;top:64px" width="35" height="246" viewBox="0 0 35 246">
<defs><g id="P"><rect width="32" height="31" fill="#9cd9d9"/><path d="M0 0H32L30 2H2V29L0 31Z" fill="#c6eeee"/><path d="M32 0V31H0L2 29H30V2Z" fill="#3e6b68"/><rect x="5.500" y="5.500" width="21" height="20" fill="none" stroke="#102020"/></g></defs>
<g transform="translate(2 1)"><use href="#P"/><path d="M9 14h11v9H9z" fill="none" stroke="#000"/><path d="M19 8h6v6h-6z" fill="none" stroke="#000"/><path d="M11 18h5M11 18l2-2v4" stroke="#000"/></g>
<g transform="translate(2 36)"><use href="#P"/><path d="M10 15h12v8H10z" fill="none" stroke="#000" stroke-width="2"/><path d="M16 7l5 5h-3v5h-4v-5h-3z"/></g>
<g transform="translate(2 71)"><use href="#P"/><path d="M10 9h12v8H10z" fill="none" stroke="#000" stroke-width="2"/><path d="M16 25l5-5h-3v-5h-4v5h-3z"/></g>
<g transform="translate(2 106)"><use href="#P"/><path d="M13 9h9v13h-9z" fill="none" stroke="#000" stroke-width="2"/><path d="M7 15.500l5-5v3h5v4h-5v3z"/></g>
<g transform="translate(2 141)"><use href="#P"/><path d="M10 9h9v13h-9z" fill="none" stroke="#000" stroke-width="2"/><path d="M25 15.500l-5-5v3h-5v4h5v3z"/></g>
<g transform="translate(2 176)"><use href="#P"/><path d="M13 12h6v7h-6z" fill="none" stroke="#000" stroke-width="2"/><path d="M16 11l5-4H11zM16 20l5 4H11zM12 15.500l-4-5v10zM20 15.500l4-5v10z"/></g>
<g transform="translate(2 211)"><use href="#P"/><path d="M13.500 13h5v5h-5z" fill="none" stroke="#000" stroke-width="1.500"/><path d="M16 6l4 4h-8zM16 25l4-4h-8zM7 15.500l4-4v8zM25 15.500l-4-4v8z"/></g>
</svg>
<div style="left:385px;top:419px;width:578px;height:31px;background:#2f6f64"></div>
<div style="left:388px;top:423px;width:572px;height:24px;background:#9cd9d9;box-sizing:border-box;border:2px solid;border-color:#c6eeee #3e6b68 #3e6b68 #c6eeee;font:14px/21px 'Liberation Mono',monospace;letter-spacing:.5px;color:#00201f;text-align:center">Close</div>

</div></body></html>
